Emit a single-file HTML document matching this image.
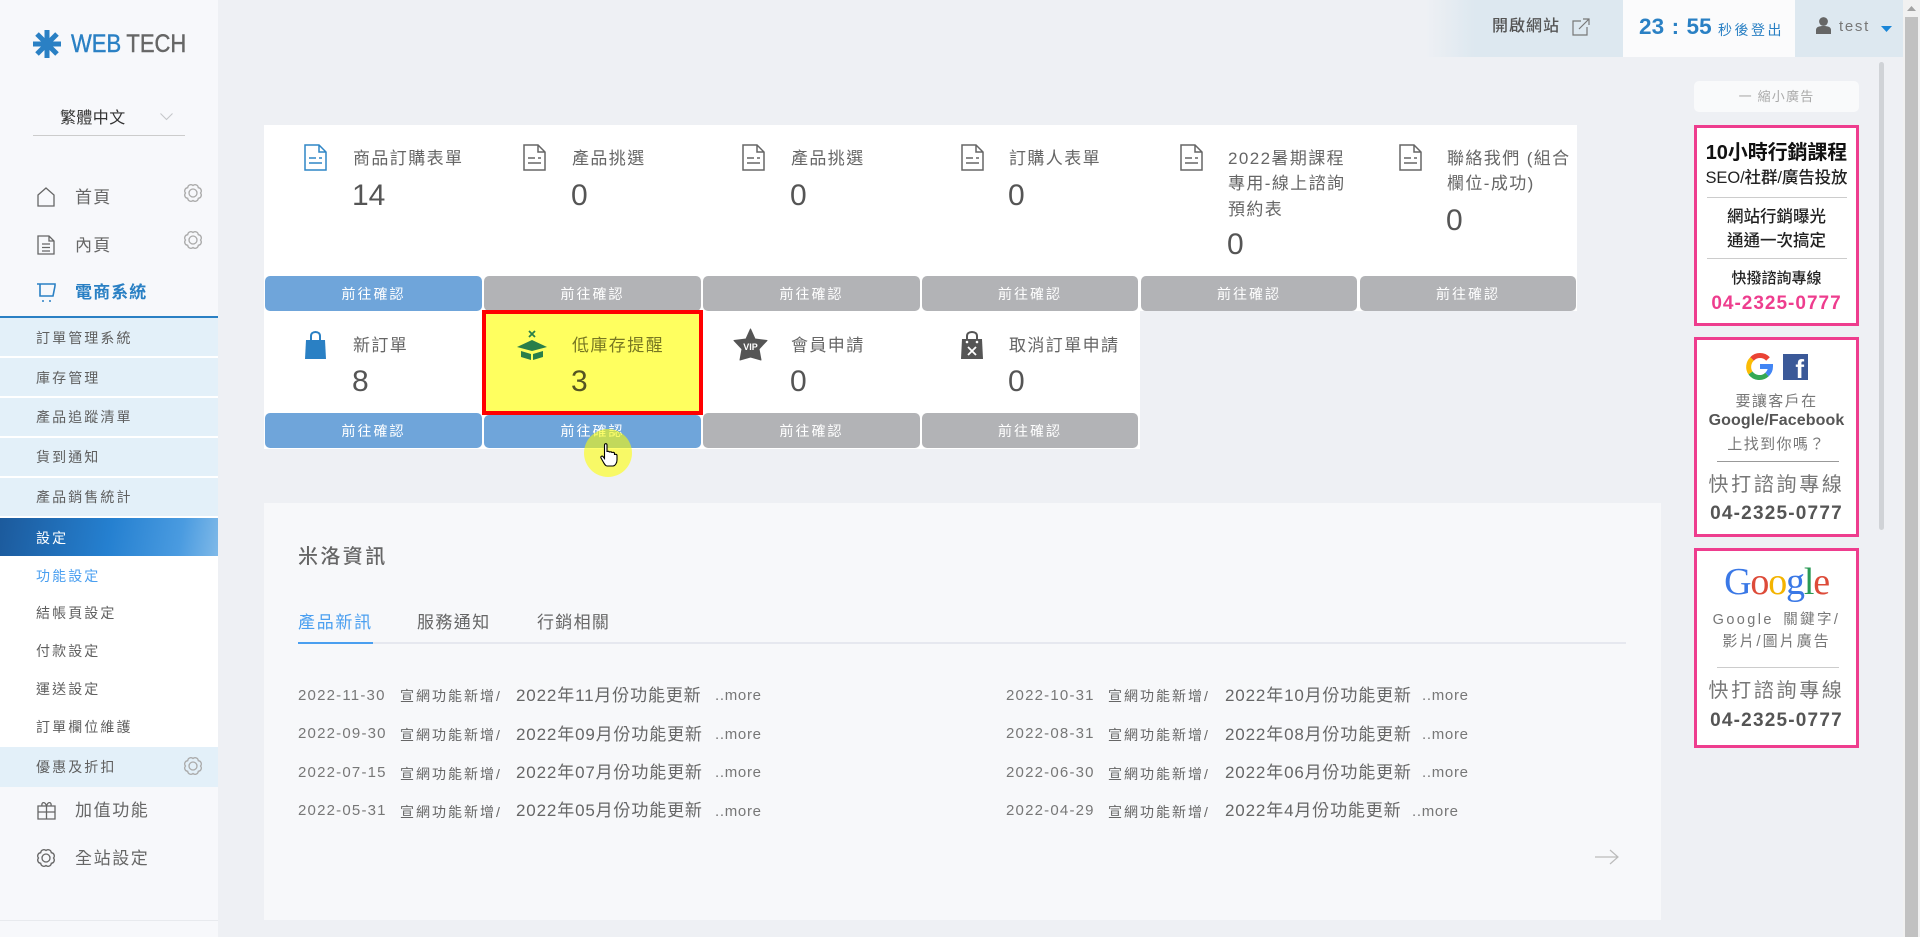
<!DOCTYPE html>
<html lang="zh-Hant">
<head>
<meta charset="utf-8">
<title>WEB TECH</title>
<style>
*{box-sizing:border-box}
html,body{margin:0;padding:0;width:1920px;height:937px;overflow:hidden;background:#eef0f4;font-family:"Liberation Sans","Noto Sans CJK TC",sans-serif;color:#666}
.a{position:absolute}
.t{position:absolute;white-space:nowrap;line-height:24px;height:24px}
svg{position:absolute;overflow:visible}
.side{left:0;top:0;width:218px;height:937px;background:#f7f8fb}
.m{font-size:17px;letter-spacing:1.2px;left:75px;color:#666}
.s{left:0;width:218px;height:38px;background:#e3f0f9}
.st{left:36px;font-size:14px;letter-spacing:2.1px;color:#5f5f5f}
.lb{font-size:17px;letter-spacing:1.4px;color:#666}
.n{font-size:30px;color:#555;line-height:30px;height:30px;margin-left:-1px}
.b{position:absolute;width:217px;height:35px;border-radius:5px;color:#fff;text-align:center;font-size:14px;letter-spacing:2px;line-height:37px;background:#b2b3b6}
.b.on{background:#6fa5da}
.d{font-size:15px;letter-spacing:1.2px;color:#777}
.c{font-size:14px;letter-spacing:2px;color:#666}
.ti{font-size:17px;letter-spacing:.85px;color:#666}
.mo{font-size:15px;letter-spacing:.7px;color:#777}
.ad{left:1694px;width:165px;background:#fff;border:3px solid #ee3d8e}
.x{left:1694px;width:165px;text-align:center}
.ln{position:absolute;height:1px;background:#bbb}
</style>
</head>
<body>
<svg width="0" height="0" style="left:0;top:0">
<defs>
<symbol id="doc" viewBox="0 0 23 27"><path d="M1 1H15L22 8V26H1Z M15 1V8H22" fill="none" stroke="currentColor" stroke-width="1.5"/><path d="M5 14H12M15 14H18M5 19H18" fill="none" stroke="currentColor" stroke-width="1.6"/></symbol>
<symbol id="gear" viewBox="0 0 20 20"><path d="M17.5 10A3.2 3.2 0 0 1 15.3 15.3A3.2 3.2 0 0 1 10 17.500A3.2 3.2 0 0 1 4.700 15.300A3.2 3.2 0 0 1 2.500 10A3.2 3.2 0 0 1 4.700 4.700A3.2 3.2 0 0 1 10 2.500A3.2 3.2 0 0 1 15.300 4.700A3.2 3.2 0 0 1 17.500 10Z" fill="none" stroke="currentColor" stroke-width="1.300"/><circle cx="10" cy="10" r="4" fill="none" stroke="currentColor" stroke-width="1.300"/></symbol>
</defs>
</svg>

<!-- SIDEBAR -->
<div class="a side"></div>
<svg style="left:33px;top:30px" width="28" height="28" viewBox="0 0 28 28"><g stroke="#2a80c4" stroke-width="5" fill="none"><path d="M14 0V28M0 14H28M4 4L24 24M24 4L4 24"/></g></svg>
<div class="t" style="left:71px;top:32px;font-size:25px;line-height:24px;transform-origin:0 50%;transform:scaleX(.88);-webkit-text-stroke:.45px"><span style="color:#2a80c4">WEB</span><span style="color:#666;margin-left:6px">TECH</span></div>
<div class="t" style="left:60px;top:107px;font-size:16px;letter-spacing:.4px;color:#333">繁體中文</div>
<svg style="left:160px;top:113px" width="13" height="8"><path d="M.5 .5L6.5 6.5L12.5 .5" fill="none" stroke="#c4c6c9" stroke-width="1.1"/></svg>
<div class="a" style="left:33px;top:135px;width:152px;height:1px;background:#ccc"></div>

<svg style="left:37px;top:187px" width="18" height="20"><path d="M1 8L9 1L17 8V19H1Z" fill="none" stroke="#666" stroke-width="1.3"/></svg>
<div class="t m" style="top:186px">首頁</div>
<svg style="left:183px;top:183px;color:#aaa" width="20" height="20"><use href="#gear"/></svg>
<svg style="left:37px;top:235px;color:#666" width="18" height="20" viewBox="0 0 18 20"><path d="M1 1H12L17 6V19H1Z M12 1V6H17 M5 9H13M5 12.5H13M5 16H13" fill="none" stroke="#666" stroke-width="1.3"/></svg>
<div class="t m" style="top:234px">內頁</div>
<svg style="left:183px;top:230px;color:#aaa" width="20" height="20"><use href="#gear"/></svg>
<svg style="left:37px;top:283px" width="19" height="19"><path d="M0 1H18V3M3 1V13H16L18 3" fill="none" stroke="#2a80c4" stroke-width="1.6"/><path d="M5 18H7M12 18H14" stroke="#2a80c4" stroke-width="1.6"/></svg>
<div class="t m" style="top:281px;color:#2a80c4;font-weight:700;letter-spacing:1.1px">電商系統</div>
<div class="a" style="left:0;top:316px;width:218px;height:2px;background:#2a80c4"></div>

<div class="a" style="left:0;top:318px;width:218px;height:429px;background:#fff"></div>
<div class="a s" style="top:318px"></div><div class="t st" style="top:326px">訂單管理系統</div>
<div class="a s" style="top:358px"></div><div class="t st" style="top:366px">庫存管理</div>
<div class="a s" style="top:398px"></div><div class="t st" style="top:405px">產品追蹤清單</div>
<div class="a s" style="top:438px"></div><div class="t st" style="top:445px">貨到通知</div>
<div class="a s" style="top:478px"></div><div class="t st" style="top:485px">產品銷售統計</div>
<div class="a s" style="top:518px;background:linear-gradient(100deg,#1c5a9c 0%,#2580d0 50%,#4a9be0 82%,#7fb9e8 100%)"></div>
<div class="t st" style="top:526px;color:#fff">設定</div>
<div class="t st" style="top:564px;color:#4a9ff0">功能設定</div>
<div class="t st" style="top:601px">結帳頁設定</div>
<div class="t st" style="top:639px">付款設定</div>
<div class="t st" style="top:677px">運送設定</div>
<div class="t st" style="top:715px">訂單欄位維護</div>
<div class="a s" style="top:747px;height:40px"></div><div class="t st" style="top:755px">優惠及折扣</div>
<svg style="left:183px;top:756px;color:#aaa" width="20" height="20"><use href="#gear"/></svg>
<svg style="left:37px;top:801px" width="19" height="19"><path d="M1 5H18V18H1Z M9.5 5V18 M1 11H18 M5 5C4 1 8 0 9.5 5C11 0 15 1 14 5" fill="none" stroke="#666" stroke-width="1.3"/></svg>
<div class="t m" style="top:799px;letter-spacing:1.6px">加值功能</div>
<svg style="left:36px;top:848px;color:#666" width="20" height="20"><use href="#gear"/></svg>
<div class="t m" style="top:847px;letter-spacing:1.6px">全站設定</div>
<div class="a" style="left:0;top:920px;width:218px;height:1px;background:#e8eaee"></div>

<!-- TOP BAR -->
<div class="a" style="left:1425px;top:0;width:198px;height:57px;background:linear-gradient(90deg,#eef0f4 0,#dde8f0 50px)"></div>
<div class="t" style="left:1492px;top:15px;font-size:16px;letter-spacing:1px;color:#555;font-weight:500">開啟網站</div>
<svg style="left:1572px;top:18px" width="18" height="18"><path d="M9 3H1V17H15V9M7 11L17 1M11 1H17V7" fill="none" stroke="#777" stroke-width="1.2"/></svg>
<div class="a" style="left:1623px;top:0;width:172px;height:57px;background:#fbfbfc"></div>
<div class="t" style="left:1639px;top:15px;font-size:22.5px;font-weight:700;color:#2a80c4;letter-spacing:.1px;word-spacing:1px">23 : 55</div>
<div class="t" style="left:1718px;top:18px;font-size:14px;letter-spacing:2.5px;color:#2a80c4">秒後登出</div>
<div class="a" style="left:1795px;top:0;width:108px;height:57px;background:#dde8f0"></div>
<svg style="left:1816px;top:17px" width="15" height="17"><circle cx="7.5" cy="4.5" r="4.4" fill="#666"/><path d="M0 17V13C0 10 3 9 7.5 9S15 10 15 13V17Z" fill="#666"/></svg>
<div class="t" style="left:1839px;top:15px;font-size:15px;letter-spacing:1.7px;color:#777">test</div>
<svg style="left:1881px;top:26px" width="11" height="6"><path d="M0 0H11L5.5 6Z" fill="#1a86d8"/></svg>

<!-- Scrollbars -->
<div class="a" style="left:1903px;top:0;width:17px;height:937px;background:#f1f1f1"></div>
<div class="a" style="left:1905px;top:17px;width:13px;height:920px;background:#c1c1c1"></div>
<svg style="left:1907px;top:6px" width="9" height="6"><path d="M0 5L4.5 0L9 5Z" fill="#a3a3a3"/></svg>
<div class="a" style="left:1879px;top:62px;width:5px;height:468px;background:#d0d3d7;border-radius:3px"></div>

<!-- CARDS -->
<div class="a" style="left:264px;top:125px;width:1313px;height:186px;background:#fff"></div>
<div class="a" style="left:264px;top:311px;width:876px;height:138px;background:#fff"></div>

<svg style="left:304px;top:144px;color:#2f86c6" width="23" height="27"><use href="#doc"/></svg>
<svg style="left:523px;top:144px;color:#666" width="23" height="27"><use href="#doc"/></svg>
<svg style="left:742px;top:144px;color:#666" width="23" height="27"><use href="#doc"/></svg>
<svg style="left:961px;top:144px;color:#666" width="23" height="27"><use href="#doc"/></svg>
<svg style="left:1180px;top:144px;color:#666" width="23" height="27"><use href="#doc"/></svg>
<svg style="left:1399px;top:144px;color:#666" width="23" height="27"><use href="#doc"/></svg>

<div class="t lb" style="left:353px;top:147px">商品訂購表單</div><div class="t n" style="left:353px;top:181px">14</div>
<div class="t lb" style="left:572px;top:147px">產品挑選</div><div class="t n" style="left:572px;top:181px">0</div>
<div class="t lb" style="left:791px;top:147px">產品挑選</div><div class="t n" style="left:791px;top:181px">0</div>
<div class="t lb" style="left:1009px;top:147px">訂購人表單</div><div class="t n" style="left:1009px;top:181px">0</div>
<div class="t lb" style="left:1228px;top:147px">2022暑期課程</div>
<div class="t lb" style="left:1228px;top:172px">專用-線上諮詢</div>
<div class="t lb" style="left:1228px;top:198px">預約表</div>
<div class="t n" style="left:1228px;top:230px">0</div>
<div class="t lb" style="left:1447px;top:147px">聯絡我們 (組合</div>
<div class="t lb" style="left:1447px;top:172px">欄位-成功)</div>
<div class="t n" style="left:1447px;top:206px">0</div>

<div class="b on" style="left:265px;top:276px">前往確認</div>
<div class="b" style="left:484px;top:276px">前往確認</div>
<div class="b" style="left:703px;top:276px">前往確認</div>
<div class="b" style="left:922px;top:276px;width:216px">前往確認</div>
<div class="b" style="left:1141px;top:276px;width:216px">前往確認</div>
<div class="b" style="left:1360px;top:276px;width:216px">前往確認</div>

<!-- row 2 -->
<div class="a" style="left:482px;top:310px;width:221px;height:105px;background:#ffff5f;border:4px solid #ff0000"></div>
<svg style="left:305px;top:331px" width="21" height="28"><path d="M1 9H20L21 28H0Z" fill="#2a80c4"/><path d="M6 11V5C6 2.500 8 1 10.500 1S15 2.500 15 5V11" fill="none" stroke="#2a80c4" stroke-width="2"/></svg>
<svg style="left:517px;top:330px" width="30" height="30"><path d="M12 1L18 7M18 1L12 7" stroke="#2a7f4a" stroke-width="1.8"/><path d="M0 17L15 10L30 17L15 21Z" fill="#2a7f4a"/><path d="M4 21L14 24V30L4 27Z M26 21L16 24V30L26 27Z" fill="#2a7f4a"/></svg>
<svg style="left:734px;top:329px" width="33" height="31"><path d="M16.500 0L21 10L33 11.500L25 20L27 31L16.500 28L6 31L8 20L0 11.500L12 10Z" fill="#555" stroke="#555" stroke-linejoin="round"/><text x="16.500" y="21" text-anchor="middle" font-family="Liberation Sans" font-size="9" font-weight="700" fill="#fff">VIP</text></svg>
<svg style="left:961px;top:331px" width="22" height="28"><path d="M1 8H21L22 28H0Z" fill="#555"/><path d="M6 11V5C6 2.500 8 1 11 1S16 2.500 16 5V11" fill="none" stroke="#555" stroke-width="2"/><circle cx="6" cy="11" r="1.300" fill="#fff"/><circle cx="16" cy="11" r="1.300" fill="#fff"/><path d="M7 16L15 24M15 16L7 24" stroke="#fff" stroke-width="1.800"/></svg>

<div class="t lb" style="left:353px;top:334px">新訂單</div><div class="t n" style="left:353px;top:367px">8</div>
<div class="t lb" style="left:572px;top:334px;color:#777722">低庫存提醒</div><div class="t n" style="left:572px;top:367px;color:#555522">3</div>
<div class="t lb" style="left:791px;top:334px">會員申請</div><div class="t n" style="left:791px;top:367px">0</div>
<div class="t lb" style="left:1009px;top:334px">取消訂單申請</div><div class="t n" style="left:1009px;top:367px">0</div>

<div class="b on" style="left:265px;top:413px">前往確認</div>
<div class="b on" style="left:484px;top:415px;height:33px;line-height:33px">前往確認</div>
<div class="b" style="left:703px;top:413px;width:217px">前往確認</div>
<div class="b" style="left:922px;top:413px;width:216px">前往確認</div>

<!-- cursor -->
<div class="a" style="left:584px;top:429px;width:48px;height:48px;border-radius:50%;background:rgba(255,255,0,.58)"></div>
<svg style="left:600px;top:443px" width="18" height="24" viewBox="0 0 18 24"><path d="M4.500 2C4.500 .300 7 .300 7 2V9C7 8 9.500 8 9.500 9.500C9.500 8.500 12 8.500 12 10C12 9 14.500 9 14.500 10.500V12C14.500 11 17 11 17 12.500V17C17 20 15 23 13 23H7C5 23 4 20 1 15C.300 13.500 2 12.500 3 13.500L4.500 15.500Z" fill="#fff" stroke="#000" stroke-width="1.100"/></svg>

<!-- NEWS -->
<div class="a" style="left:264px;top:503px;width:1397px;height:417px;background:#f7f8fa"></div>
<div class="t" style="left:298px;top:545px;font-size:20px;letter-spacing:2.4px;color:#666;font-weight:500">米洛資訊</div>
<div class="t" style="left:298px;top:611px;font-size:17px;letter-spacing:1.7px;color:#4a9ff0">產品新訊</div>
<div class="t" style="left:417px;top:611px;font-size:17px;letter-spacing:1.4px;color:#666">服務通知</div>
<div class="t" style="left:537px;top:611px;font-size:17px;letter-spacing:1.3px;color:#666">行銷相關</div>
<div class="a" style="left:298px;top:642px;width:1328px;height:2px;background:#e6e8ef"></div>
<div class="a" style="left:298px;top:642px;width:75px;height:2px;background:#4a9ff0"></div>

<div class="t d" style="left:298px;top:684px">2022-11-30</div><div class="t c" style="left:400px;top:684px">宣網功能新增/</div><div class="t ti" style="left:516px;top:684px">2022年11月份功能更新</div><div class="t mo" style="left:715px;top:684px">..more</div>
<div class="t d" style="left:298px;top:722px">2022-09-30</div><div class="t c" style="left:400px;top:723px">宣網功能新增/</div><div class="t ti" style="left:516px;top:723px">2022年09月份功能更新</div><div class="t mo" style="left:715px;top:723px">..more</div>
<div class="t d" style="left:298px;top:761px">2022-07-15</div><div class="t c" style="left:400px;top:762px">宣網功能新增/</div><div class="t ti" style="left:516px;top:761px">2022年07月份功能更新</div><div class="t mo" style="left:715px;top:761px">..more</div>
<div class="t d" style="left:298px;top:799px">2022-05-31</div><div class="t c" style="left:400px;top:800px">宣網功能新增/</div><div class="t ti" style="left:516px;top:799px">2022年05月份功能更新</div><div class="t mo" style="left:715px;top:800px">..more</div>

<div class="t d" style="left:1006px;top:684px">2022-10-31</div><div class="t c" style="left:1108px;top:684px">宣網功能新增/</div><div class="t ti" style="left:1225px;top:684px">2022年10月份功能更新</div><div class="t mo" style="left:1422px;top:684px">..more</div>
<div class="t d" style="left:1006px;top:722px">2022-08-31</div><div class="t c" style="left:1108px;top:723px">宣網功能新增/</div><div class="t ti" style="left:1225px;top:723px">2022年08月份功能更新</div><div class="t mo" style="left:1422px;top:723px">..more</div>
<div class="t d" style="left:1006px;top:761px">2022-06-30</div><div class="t c" style="left:1108px;top:762px">宣網功能新增/</div><div class="t ti" style="left:1225px;top:761px">2022年06月份功能更新</div><div class="t mo" style="left:1422px;top:761px">..more</div>
<div class="t d" style="left:1006px;top:799px">2022-04-29</div><div class="t c" style="left:1108px;top:800px">宣網功能新增/</div><div class="t ti" style="left:1225px;top:799px">2022年4月份功能更新</div><div class="t mo" style="left:1412px;top:800px">..more</div>
<svg style="left:1595px;top:849px" width="24" height="16"><path d="M0 8H23M15 1L23 8L15 15" fill="none" stroke="#bbb" stroke-width="1.200"/></svg>

<!-- ADS -->
<div class="a" style="left:1694px;top:81px;width:165px;height:31px;background:#f9fafb;border-radius:5px;color:#aaa;font-size:13px;letter-spacing:1.200px;text-align:center;line-height:31px">一 縮小廣告</div>

<div class="a ad" style="top:125px;height:201px"></div>
<div class="t x" style="top:141px;font-size:20px;font-weight:700;color:#111;letter-spacing:-.1px">10小時行銷課程</div>
<div class="t x" style="top:166px;font-size:16.500px;color:#222;font-weight:500;letter-spacing:-.1px">SEO/社群/廣告投放</div>
<div class="ln" style="left:1707px;top:197px;width:140px;background:#ccc"></div>
<div class="t x" style="top:205px;font-size:16.500px;color:#222;font-weight:500">網站行銷曝光</div>
<div class="t x" style="top:229px;font-size:16.500px;color:#222;font-weight:500">通通一次搞定</div>
<div class="ln" style="left:1707px;top:258px;width:140px;background:#ccc"></div>
<div class="t x" style="top:267px;font-size:15px;color:#222;font-weight:500">快撥諮詢專線</div>
<div class="t x" style="top:292px;font-size:19px;font-weight:700;color:#ee3d8e;letter-spacing:1px">04-2325-0777</div>

<div class="a ad" style="top:337px;height:200px"></div>
<svg style="left:1746px;top:353px" width="27" height="27" viewBox="0 0 27 27"><g fill="none" stroke-width="5"><path d="M22 6A11 11 0 0 0 6 6" stroke="#ea4335"/><path d="M6 6A11 11 0 0 0 4.500 20" stroke="#fbbc05"/><path d="M4.500 20A11 11 0 0 0 21 21.500" stroke="#34a853"/><path d="M21 21.500A11 11 0 0 0 24.500 13.500H14" stroke="#4285f4"/></g></svg>
<div class="a" style="left:1783px;top:354px;width:25px;height:26px;background:#3b5998;color:#fff;font:700 26px/30px 'Liberation Sans',sans-serif;text-align:right;padding-right:4px;overflow:hidden">f</div>
<div class="t x" style="top:390px;font-size:15px;letter-spacing:1.400px;color:#777">要讓客戶在</div>
<div class="t x" style="top:409px;font-size:16px;font-weight:700;color:#555;letter-spacing:.1px">Google/Facebook</div>
<div class="t x" style="top:433px;font-size:15px;letter-spacing:1.400px;color:#777">上找到你嗎？</div>
<div class="ln" style="left:1717px;top:461px;width:122px;background:#999"></div>
<div class="t x" style="top:473px;font-size:20px;letter-spacing:2.700px;color:#777">快打諮詢專線</div>
<div class="t x" style="top:502px;font-size:19px;font-weight:700;color:#555;letter-spacing:1.200px">04-2325-0777</div>

<div class="a ad" style="top:548px;height:200px"></div>
<div class="t x" style="top:564px;height:36px;font:38px/36px 'Liberation Serif',serif;letter-spacing:-1.200px"><span style="color:#3a78e6">G</span><span style="color:#dd4b39">o</span><span style="color:#f4b400">o</span><span style="color:#3a78e6">g</span><span style="color:#2a9a55">l</span><span style="color:#dd4b39">e</span></div>
<div class="t x" style="top:608px;font-size:14.500px;letter-spacing:2.400px;color:#777;word-spacing:3px">Google 關鍵字/</div>
<div class="t x" style="top:630px;font-size:15px;letter-spacing:2px;color:#777">影片/圖片廣告</div>
<div class="ln" style="left:1717px;top:667px;width:122px;background:#ccc"></div>
<div class="t x" style="top:679px;font-size:20px;letter-spacing:2.700px;color:#777">快打諮詢專線</div>
<div class="t x" style="top:709px;font-size:19px;font-weight:700;color:#555;letter-spacing:1.200px">04-2325-0777</div>
</body>
</html>
